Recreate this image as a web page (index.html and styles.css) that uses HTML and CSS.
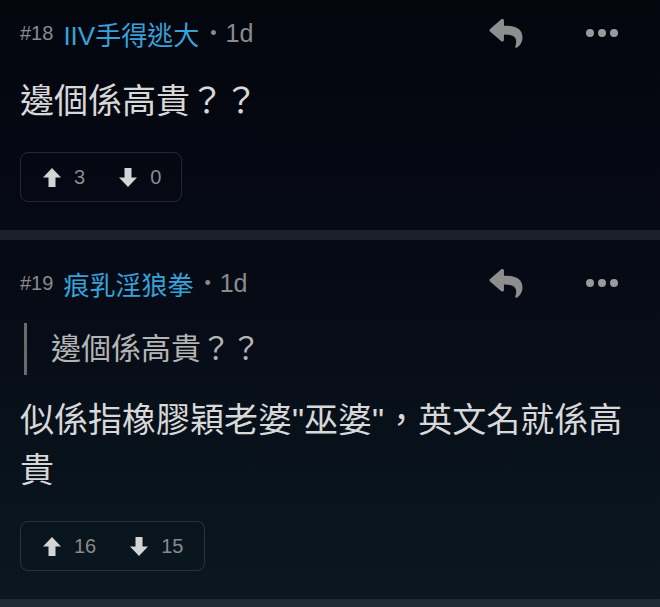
FILE: index.html
```html
<!DOCTYPE html>
<html lang="zh-HK">
<head>
    <meta charset="UTF-8">
    <meta name="viewport" content="width=device-width, initial-scale=1.0">
    <title>回覆</title>
    <link rel="stylesheet" href="styles.css">
</head>
<body>
    <div class="thread">
        <div class="post post-first">
            <div class="post-head">
                <span class="floor">#18</span>
                <span class="user">IIV手得逃大</span>
                <span class="dot">•</span>
                <span class="time">1d</span>
                <div class="actions">
                    <svg class="reply" viewBox="0 33 512 450"><path d="M8.3 189.8L184.3 37.9C199.7 24.5 224 35.3 224 56v80.1c160.6 1.8 288 34 288 186.2 0 61.4-39.6 122.3-83.3 154.1-13.7 9.9-33.1-2.5-28.1-18.6 45.3-145-21.5-183.5-176.6-185.7V360c0 20.7-24.3 31.5-39.7 18.2l-176-152c-11.1-9.6-11.1-26.8 0-36.4z"/></svg>
                    <div class="more"><i></i><i></i><i></i></div>
                </div>
            </div>
            <div class="post-body">邊個係高貴？？</div>
            <div class="votes">
                <svg class="arrow" viewBox="0 0 18 19"><polygon points="9,0 18,9.5 12.5,9.5 12.5,19 5.5,19 5.5,9.5 0,9.5"/></svg>
                <span class="count">3</span>
                <svg class="arrow down" viewBox="0 0 18 19"><polygon points="9,19 18,9.5 12.5,9.5 12.5,0 5.5,0 5.5,9.5 0,9.5"/></svg>
                <span class="count">0</span>
            </div>
        </div>
        <div class="divider"></div>
        <div class="post">
            <div class="post-head">
                <span class="floor">#19</span>
                <span class="user">痕乳淫狼拳</span>
                <span class="dot">•</span>
                <span class="time">1d</span>
                <div class="actions">
                    <svg class="reply" viewBox="0 33 512 450"><path d="M8.3 189.8L184.3 37.9C199.7 24.5 224 35.3 224 56v80.1c160.6 1.8 288 34 288 186.2 0 61.4-39.6 122.3-83.3 154.1-13.7 9.9-33.1-2.5-28.1-18.6 45.3-145-21.5-183.5-176.6-185.7V360c0 20.7-24.3 31.5-39.7 18.2l-176-152c-11.1-9.6-11.1-26.8 0-36.4z"/></svg>
                    <div class="more"><i></i><i></i><i></i></div>
                </div>
            </div>
            <blockquote class="quote">邊個係高貴？？</blockquote>
            <div class="post-body">似係指橡膠穎老婆"巫婆"，英文名就係高貴</div>
            <div class="votes">
                <svg class="arrow" viewBox="0 0 18 19"><polygon points="9,0 18,9.5 12.5,9.5 12.5,19 5.5,19 5.5,9.5 0,9.5"/></svg>
                <span class="count">16</span>
                <svg class="arrow down" viewBox="0 0 18 19"><polygon points="9,19 18,9.5 12.5,9.5 12.5,0 5.5,0 5.5,9.5 0,9.5"/></svg>
                <span class="count">15</span>
            </div>
        </div>
        <div class="divider"></div>
    </div>
</body>
</html>
```

FILE: styles.css
```css
body {
    margin: 0;
    padding: 0;
    width: 660px;
    height: 607px;
    overflow: hidden;
    background: linear-gradient(to bottom, #04060e 0%, #060a15 45%, #0a1820 100%);
    font-family: "Liberation Sans", "Noto Sans CJK TC", sans-serif;
    color: #dcdcdc;
}
.thread {
    display: flex;
    flex-direction: column;
}
.post {
    padding: 23px 20px 28px 20px;
}
.post-first {
    padding-top: 13px;
}
.post-head {
    display: flex;
    align-items: center;
    height: 40px;
}
.post-head .floor {
    font-size: 20px;
    color: #8a8a8a;
    margin-right: 10px;
}
.post-head .user {
    font-size: 26px;
    color: #36a2da;
}
.post-head .dot {
    font-size: 18px;
    color: #8a8a8a;
    margin: 0 9px 0 11px;
}
.post-head .time {
    font-size: 25px;
    color: #8a8a8a;
}
.actions {
    margin-left: auto;
    margin-right: 22px;
    display: flex;
    align-items: center;
}
.reply {
    width: 34px;
    height: 29px;
    fill: #8e8e8e;
    margin-right: 63px;
}
.more {
    display: flex;
    gap: 4px;
}
.more i {
    display: block;
    width: 8px;
    height: 8px;
    border-radius: 50%;
    background: #9a9a9a;
}
.post-body {
    margin-top: 23px;
    font-size: 34px;
    line-height: 50px;
    color: #d8d8d8;
}
.quote {
    margin: 20px 0 0 4px;
    padding-left: 24px;
    border-left: 3px solid #6a6a6a;
    font-size: 30px;
    line-height: 52px;
    color: #b4b4b4;
}
.quote + .post-body {
    margin-top: 20px;
}
.votes {
    margin-top: 26px;
    display: inline-flex;
    align-items: center;
    height: 50px;
    box-sizing: border-box;
    padding: 0 20px 0 22px;
    border: 1px solid rgba(255, 255, 255, 0.13);
    border-radius: 8px;
}
.votes .arrow {
    width: 18px;
    height: 19px;
    fill: #d4d4d4;
    margin-right: 13px;
}
.votes .arrow.down {
    margin-left: 34px;
}
.votes .count {
    font-size: 20px;
    color: #8a8a8a;
}
.divider {
    height: 10px;
    background: rgba(255, 255, 255, 0.09);
}
```
